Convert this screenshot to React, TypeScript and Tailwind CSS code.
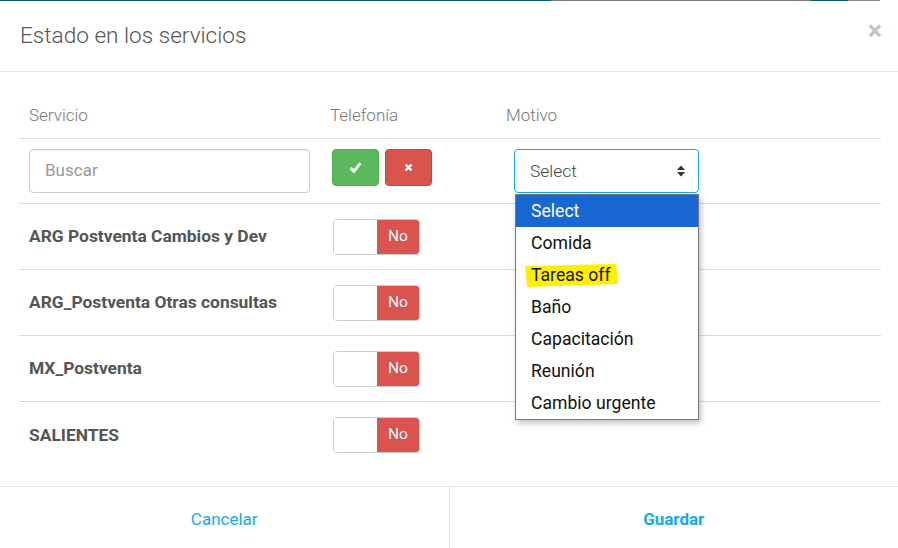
const services = [
  'ARG Postventa Cambios y Dev',
  'ARG_Postventa Otras consultas',
  'MX_Postventa',
  'SALIENTES',
];

const motivos = ['Comida', 'Tareas off', 'Baño', 'Capacitación', 'Reunión', 'Cambio urgente'];

function Toggle() {
  return (
    <div className="ml-[13px] flex h-[36px] w-[87px] overflow-hidden rounded-[4px] border border-[#ccc]">
      <div className="w-[43px] bg-white" />
      <div className="flex flex-1 items-center justify-center bg-[#d9534f] text-[15.5px] text-white">No</div>
    </div>
  );
}

function Dropdown() {
  return (
    <div className="absolute left-[515px] top-[194px] w-[184px] border border-[#7a7a7a] bg-white shadow-[2px_3px_6px_rgba(0,0,0,0.25)]">
      <div className="flex h-[32px] items-center bg-[#1967d2] pl-[15px] text-[17.6px] text-white">Select</div>
      {motivos.map((m) => (
        <div key={m} className="relative flex h-[32px] items-center pl-[15px] text-[17.6px] text-[#111]">
          {m === 'Tareas off' && (
            <svg className="absolute left-[6px] top-[3px]" width="96" height="26" viewBox="0 0 96 26">
              <path d="M3 4 L94 2 L96 22 L5 25 Z" fill="#ffee00" />
            </svg>
          )}
          <span className="relative">{m}</span>
        </div>
      ))}
    </div>
  );
}

export default function App() {
  return (
    <div className="relative h-[548px] w-[898px] overflow-hidden bg-white font-['Roboto',sans-serif]">
      {/* franja del fondo */}
      <div className="flex h-px">
        <div className="w-[551px] bg-[#0b5a7a]" />
        <div className="w-[260px] bg-[#7a7a7a]" />
        <div className="w-[37px] bg-[#0b5a7a]" />
        <div className="w-[32px] bg-[#8a8a8a]" />
        <div className="flex-1 bg-white" />
      </div>

      {/* header */}
      <div className="flex h-[71px] items-center justify-between border-b border-[#e5e5e5] pl-[20px] pr-[16px]">
        <h4 className="text-[22.6px] font-light text-[#555]">Estado en los servicios</h4>
        <span className="-mt-[10px] text-[27px] font-bold leading-none text-[#c4c4c4]">×</span>
      </div>

      {/* body */}
      <div className="pl-[19px] pr-[17px] pt-[22px]">
        <div className="flex h-[45px] items-center border-b border-[#ddd] text-[17px] font-light text-[#777]">
          <div className="w-[301px] pl-[10px]">Servicio</div>
          <div className="w-[176px] pl-[10px]">Telefonía</div>
          <div className="pl-[10px]">Motivo</div>
        </div>

        <div className="flex h-[65px] items-start border-b border-[#ddd] pt-[10px]">
          <div className="w-[301px] pl-[10px]">
            <div className="flex h-[44px] w-[281px] items-center rounded-[4px] border border-[#ccc] pl-[15px] text-[17px] text-[#999] shadow-[inset_0_1px_1px_rgba(0,0,0,0.075)]">
              Buscar
            </div>
          </div>
          <div className="flex w-[176px] gap-[6px] pl-[12px]">
            <button className="flex h-[37px] w-[47px] items-center justify-center rounded-[4px] border border-[#4cae4c] bg-[#5cb85c]">
              <svg width="13" height="13" viewBox="0 0 12 12">
                <path d="M1.5 6.5 L4.5 9.5 L10.5 2" stroke="white" strokeWidth="2.6" fill="none" />
              </svg>
            </button>
            <button className="flex h-[37px] w-[47px] items-center justify-center rounded-[4px] border border-[#d43f3a] bg-[#d9534f]">
              <svg width="9" height="9" viewBox="0 0 9 9">
                <path d="M1.5 1.5 L7.5 7.5 M7.5 1.5 L1.5 7.5" stroke="white" strokeWidth="2.4" />
              </svg>
            </button>
          </div>
          <div className="pl-[18px]">
            <div className="flex h-[44px] w-[185px] items-center justify-between rounded-[4px] border border-[#1aa7ee] pl-[15px] pr-[12px] text-[17.4px] font-light text-[#444]">
              <span>Select</span>
              <svg width="10" height="16" viewBox="0 0 10 16">
                <path d="M1 7 L5 2.5 L9 7 Z M1 9 L5 13.5 L9 9 Z" fill="#333" />
              </svg>
            </div>
          </div>
        </div>

        {services.map((s, i) => (
          <div
            key={s}
            className={`flex h-[66px] items-center ${i < services.length - 1 ? 'border-b border-[#ddd]' : ''}`}
          >
            <div className="w-[301px] pl-[10px] text-[17.4px] font-bold text-[#555]">{s}</div>
            <Toggle />
          </div>
        ))}
      </div>

      {/* footer */}
      <div className="absolute bottom-0 left-0 right-0 flex h-[62px] border-t border-[#e5e5e5]">
        <button className="flex-1 pt-[4px] text-[17px] text-[#14aaf0]">Cancelar</button>
        <button className="flex-1 border-l border-[#e5e5e5] pt-[4px] text-[17px] font-bold text-[#14aaf0]">Guardar</button>
      </div>

      <Dropdown />
    </div>
  );
}
